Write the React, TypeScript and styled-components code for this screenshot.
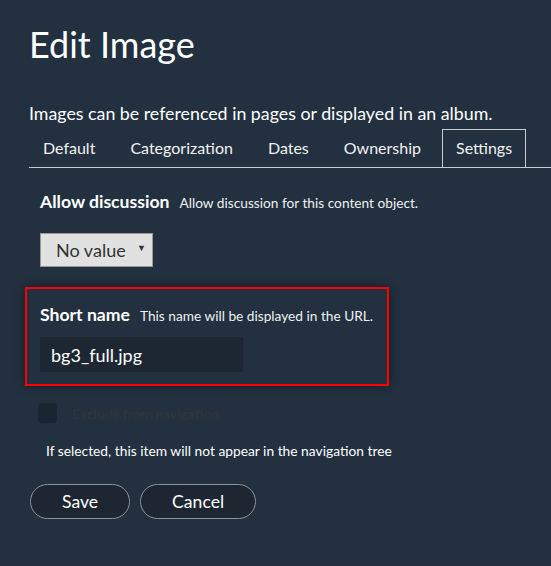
import React from "react";
import styled, { createGlobalStyle } from "styled-components";

const Global = createGlobalStyle`
  html, body { margin: 0; padding: 0; background: #22303f; }
  body { font-family: Lato, "Noto Sans", sans-serif; color: #fff; }
  * { box-sizing: border-box; }
`;

const Page = styled.div`
  min-height: 566px;
  padding: 23px 0 0 29px;
  overflow: hidden;
`;

const Title = styled.h1`
  margin: 0;
  font-size: 36px;
  font-weight: 400;
  line-height: 43px;
  color: #fff;
`;

const Lead = styled.p`
  margin: 36px 0 0;
  font-size: 17.8px;
  line-height: 22px;
  color: #fff;
`;

const TabList = styled.div`
  display: flex;
  gap: 7px;
  margin-top: 5px;
  border-bottom: 1px solid #c9ccd0;
`;

const Tab = styled.div<{ $active?: boolean }>`
  padding: 8px 13px 9px;
  font-size: 16px;
  line-height: 20px;
  color: #f2f2f2;
  border: 1px solid ${(p) => (p.$active ? "#c9ccd0" : "transparent")};
  border-bottom: none;
`;

const Content = styled.div`
  padding-left: 11px;
  display: flex;
  flex-direction: column;
  align-items: flex-start;
`;

const FieldLabel = styled.div<{ $mt?: number }>`
  margin-top: ${(p) => p.$mt ?? 0}px;
  height: 22px;
  display: flex;
  align-items: baseline;
  gap: 10px;
  white-space: nowrap;
`;

const LabelTitle = styled.span`
  font-size: 17.6px;
  line-height: 22px;
  font-weight: 700;
  color: #fff;
`;

const LabelHelp = styled.span`
  font-size: 13.7px;
  line-height: 16px;
  color: #eef0f2;
`;

const Select = styled.div`
  margin-top: 20px;
  width: 113px;
  height: 34px;
  display: flex;
  align-items: center;
  justify-content: space-between;
  padding: 0 6px 0 15px;
  background: #e1e1e1;
  border: 1px solid #9a9a9a;
  color: #333;
  font-size: 18px;
`;

const Caret = styled.span`
  font-size: 9px;
  color: #333;
  margin-top: -6px;
`;

const Highlight = styled.div`
  margin: 20px 0 0 -15px;
  width: 364px;
  padding: 15px 13px 12px;
  border: 2px solid #ff0000;
  box-shadow: 0 0 10px rgba(0, 0, 0, 0.45);
`;

const TextInput = styled.div`
  margin-top: 11px;
  width: 203px;
  height: 35px;
  padding-left: 11px;
  display: flex;
  align-items: center;
  background: #1d2733;
  color: #fff;
  font-size: 18px;
`;

const CheckRow = styled.div`
  margin: 17px 0 0 -2px;
  display: flex;
  align-items: center;
  gap: 15px;
`;

const CheckBox = styled.span`
  width: 19px;
  height: 20px;
  border-radius: 4px;
  background: #1a2532;
`;

const CheckLabel = styled.span`
  font-size: 13.7px;
  font-weight: 700;
  color: #30343a;
`;

const Help = styled.div`
  margin-top: 19px;
  padding-left: 6px;
  font-size: 13.8px;
  line-height: 17px;
  color: #fff;
`;

const Actions = styled.div`
  margin: 25px 0 0 -10px;
  display: flex;
  gap: 10px;
`;

const Button = styled.button`
  height: 35px;
  padding: 0 31px;
  border: 1px solid #8c939c;
  border-radius: 18px;
  background: #1d2631;
  color: #fff;
  font-family: Lato, "Noto Sans", sans-serif;
  font-size: 17.6px;
`;

const tabs = ["Default", "Categorization", "Dates", "Ownership", "Settings"];

export default function App() {
  return (
    <>
      <Global />
      <Page>
        <Title>Edit Image</Title>
        <Lead>Images can be referenced in pages or displayed in an album.</Lead>
        <TabList>
          {tabs.map((t) => (
            <Tab key={t} $active={t === "Settings"}>
              {t}
            </Tab>
          ))}
        </TabList>
        <Content>
          <FieldLabel $mt={23}>
            <LabelTitle>Allow discussion</LabelTitle>
            <LabelHelp>Allow discussion for this content object.</LabelHelp>
          </FieldLabel>
          <Select>
            <span>No value</span>
            <Caret>▼</Caret>
          </Select>
          <Highlight>
            <FieldLabel>
              <LabelTitle>Short name</LabelTitle>
              <LabelHelp>This name will be displayed in the URL.</LabelHelp>
            </FieldLabel>
            <TextInput>bg3_full.jpg</TextInput>
          </Highlight>
          <CheckRow>
            <CheckBox />
            <CheckLabel>Exclude from navigation</CheckLabel>
          </CheckRow>
          <Help>If selected, this item will not appear in the navigation tree</Help>
          <Actions>
            <Button>Save</Button>
            <Button>Cancel</Button>
          </Actions>
        </Content>
      </Page>
    </>
  );
}
